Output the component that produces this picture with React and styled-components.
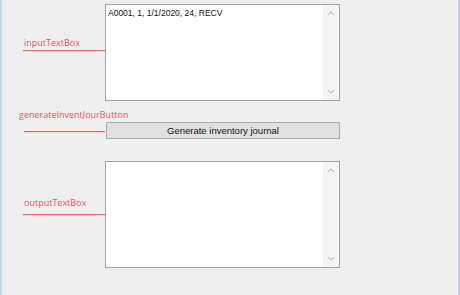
import React from "react";
import styled, { createGlobalStyle } from "styled-components";

const GlobalStyle = createGlobalStyle`
  html, body {
    margin: 0;
    padding: 0;
    background: #f0f0f0;
  }
  #root {
    width: 460px;
    height: 295px;
  }
`;

const Form = styled.div`
  box-sizing: border-box;
  width: 460px;
  height: 295px;
  background: #efefef;
  border-left: 2px solid #c3d9f1;
  border-right: 2px solid #bcd4ef;
  display: flex;
  flex-direction: column;
  padding-top: 4px;
  overflow: hidden;
`;

const Row = styled.div`
  display: flex;
  align-items: flex-start;
  margin-top: ${(p) => p.$gap || 0}px;
`;

const LabelCol = styled.div`
  width: 103px;
  flex-shrink: 0;
  display: flex;
  flex-direction: column;
  margin-top: ${(p) => p.$top}px;
`;

const Label = styled.span`
  font-family: "Open Sans", "Noto Sans", sans-serif;
  font-size: 9px;
  line-height: 12px;
  color: #ef5555;
  white-space: nowrap;
  padding-left: ${(p) => p.$indent}px;
`;

const Line = styled.div`
  height: 1px;
  margin-top: ${(p) => p.$gap}px;
  margin-left: ${(p) => p.$indent}px;
  background: #ec6a6a;
  box-shadow: 0 0.5px 0 rgba(236, 106, 106, 0.45);
`;

const TextBox = styled.div`
  box-sizing: border-box;
  width: 235px;
  height: ${(p) => p.$height}px;
  background: #fff;
  border: 1px solid #a3a3a3;
  display: flex;
`;

const TextArea = styled.div`
  flex: 1;
  padding: 3px 2px;
  font-family: "Liberation Sans", Arial, sans-serif;
  font-size: 8.5px;
  line-height: 11px;
  color: #111;
  white-space: pre;
`;

const ScrollBar = styled.div`
  width: 16px;
  flex-shrink: 0;
  background: #f5f5f5;
  display: flex;
  flex-direction: column;
  justify-content: space-between;
  align-items: center;
  padding: 6px 0 6px;
`;

const Chevron = ({ down }) => (
  <svg width="8" height="5" viewBox="0 0 8 5">
    <path
      d={down ? "M0.8 0.8 L4 4 L7.2 0.8" : "M0.8 4.2 L4 1 L7.2 4.2"}
      fill="none"
      stroke="#c4c4c4"
      strokeWidth="1.1"
    />
  </svg>
);

const Button = styled.button`
  box-sizing: border-box;
  width: 234px;
  height: 17px;
  margin: 0 0 0 1px;
  padding: 0;
  background: #e1e1e1;
  border: 1px solid #adadad;
  border-radius: 0;
  font-family: "Liberation Sans", Arial, sans-serif;
  font-size: 9.5px;
  color: #111;
  line-height: 15px;
`;

const MultiLineBox = ({ height, text }) => (
  <TextBox $height={height}>
    <TextArea>{text}</TextArea>
    <ScrollBar>
      <Chevron />
      <Chevron down />
    </ScrollBar>
  </TextBox>
);

export default function App() {
  return (
    <>
      <GlobalStyle />
      <Form>
        <Row>
          <LabelCol $top={33}>
            <Label $indent={22}>inputTextBox</Label>
            <Line $indent={21} $gap={1} />
          </LabelCol>
          <MultiLineBox height={97} text="A0001, 1, 1/1/2020, 24, RECV" />
        </Row>
        <Row $gap={21}>
          <LabelCol $top={-13}>
            <Label $indent={17}>generateInventJourButton</Label>
            <Line $indent={22} $gap={10} />
          </LabelCol>
          <Button>Generate inventory journal</Button>
        </Row>
        <Row $gap={22}>
          <LabelCol $top={36}>
            <Label $indent={22}>outputTextBox</Label>
            <Line $indent={21} $gap={5} />
          </LabelCol>
          <MultiLineBox height={107} text="" />
        </Row>
      </Form>
    </>
  );
}
